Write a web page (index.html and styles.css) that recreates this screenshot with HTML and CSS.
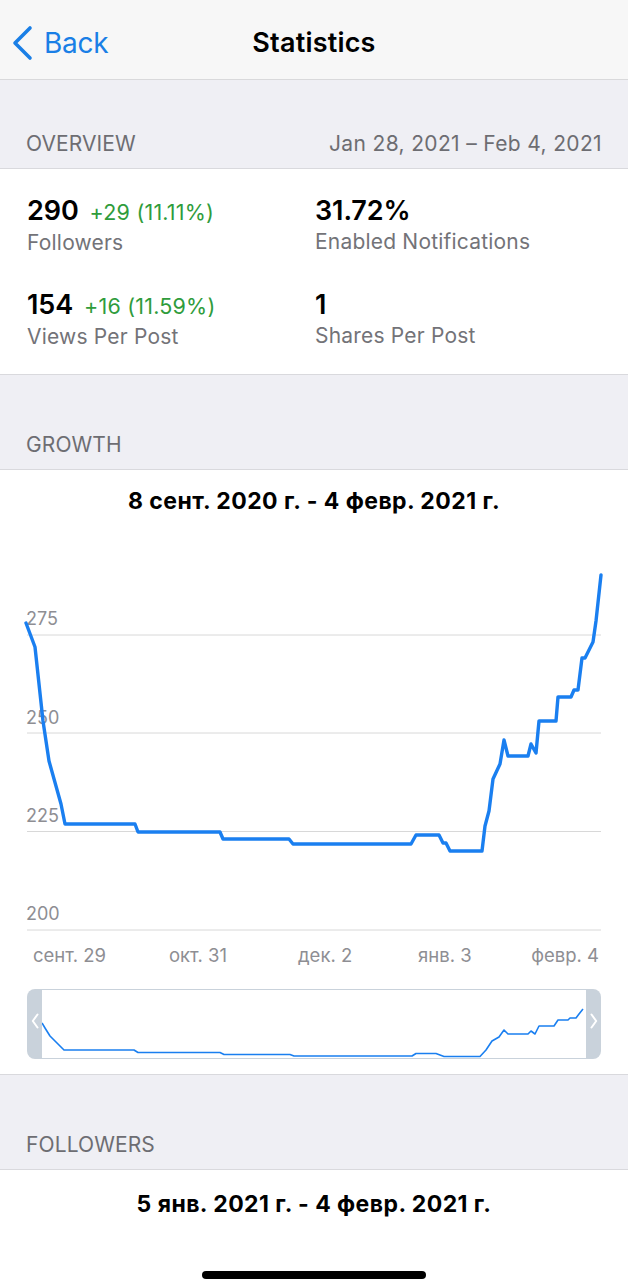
FILE: index.html
```html
<!DOCTYPE html>
<html lang="en">
<head>
<meta charset="utf-8">
<title>Statistics</title>
<link rel="stylesheet" href="styles.css">
</head>
<body>
<div class="screen">
  <header class="navbar">
    <a class="back">
      <svg class="back-chevron" width="24" height="36" viewBox="0 0 24 36"><path d="M20 3 L5 18 L20 33" fill="none" stroke="#1a7fe6" stroke-width="3.6" stroke-linecap="round" stroke-linejoin="round"/></svg>
      <span>Back</span>
    </a>
    <div class="nav-title">Statistics</div>
  </header>

  <div class="section-header first">
    <span>OVERVIEW</span>
    <span class="range">Jan 28, 2021 – Feb 4, 2021</span>
  </div>

  <section class="card overview">
    <div class="stat">
      <div class="value">290<span class="delta">+29 (11.11%)</span></div>
      <div class="label">Followers</div>
    </div>
    <div class="stat">
      <div class="value">31.72%</div>
      <div class="label">Enabled Notifications</div>
    </div>
    <div class="stat">
      <div class="value">154<span class="delta">+16 (11.59%)</span></div>
      <div class="label">Views Per Post</div>
    </div>
    <div class="stat">
      <div class="value">1</div>
      <div class="label">Shares Per Post</div>
    </div>
  </section>

  <div class="section-header">
    <span>GROWTH</span>
  </div>

  <section class="card chart-card">
    <div class="chart-title">8 сент. 2020 г. - 4 февр. 2021 г.</div>
    <svg class="chart" width="628" height="440" viewBox="0 530 628 440">
      <g class="grid">
        <line x1="27" y1="634" x2="601" y2="634"/>
        <line x1="27" y1="732" x2="601" y2="732"/>
        <line x1="27" y1="830.5" x2="601" y2="830.5"/>
        <line x1="27" y1="929" x2="601" y2="929"/>
      </g>
      <g class="ylabels">
        <text x="26" y="624">275</text>
        <text x="26" y="722.5">250</text>
        <text x="26" y="821">225</text>
        <text x="26" y="919">200</text>
      </g>
      <polyline class="line" points="26,622 35,646 43,720 49,760 61,803 65,823 135,823 138,831 220,831 223,838 289,838 293,843 411,843 416,834 439,834 443,842 446,842 450,850 482,850 485,825 489,810 493,778 500,763 504,739 508,755 528,755 531,743 536,752 539,720 556,720 558,696 571,696 574,689 578,689 582,657 585,657 593,641 596,620 601,574"/>
      <g class="xlabels">
        <text x="33" y="961">сент. 29</text>
        <text x="169" y="961">окт. 31</text>
        <text x="298" y="961">дек. 2</text>
        <text x="418" y="961">янв. 3</text>
        <text x="599" y="961" text-anchor="end">февр. 4</text>
      </g>
    </svg>
    <div class="navigator">
      <div class="handle">
        <svg width="8" height="16" viewBox="0 0 8 16"><path d="M6.5 1.5 L1.8 8 L6.5 14.5" fill="none" stroke="#fff" stroke-width="2" stroke-linecap="round" stroke-linejoin="round"/></svg>
      </div>
      <div class="window">
        <svg class="mini" width="543" height="68" viewBox="42 989 543 68">
          <polyline points="42,1022 45,1027 50,1035 64,1049 134,1049 138,1051.5 220,1051.5 224,1053.5 290,1053.5 294,1055 412,1055 416,1052.5 436,1052.5 440,1054 444,1055.5 480,1055.5 486,1049 492,1040 499,1036 504,1029 508,1033 528,1033 531,1030 535,1033 539,1025 554,1025 558,1019 568,1019 570,1017 576,1017 579,1013 583,1008"/>
        </svg>
      </div>
      <div class="handle">
        <svg width="8" height="16" viewBox="0 0 8 16"><path d="M1.5 1.5 L6.2 8 L1.5 14.5" fill="none" stroke="#fff" stroke-width="2" stroke-linecap="round" stroke-linejoin="round"/></svg>
      </div>
    </div>
  </section>

  <div class="section-header">
    <span>FOLLOWERS</span>
  </div>

  <section class="card followers-card">
    <div class="chart-title">5 янв. 2021 г. - 4 февр. 2021 г.</div>
    <div class="home-indicator"></div>
  </section>
</div>
</body>
</html>
```

FILE: styles.css
```css
* { box-sizing: border-box; }

html, body {
  margin: 0;
  padding: 0;
  background: #efeff4;
}

body {
  font-family: "Inter", "Roboto", "Liberation Sans", sans-serif;
  color: #000;
  -webkit-font-smoothing: antialiased;
}

.screen {
  width: 628px;
  height: 1280px;
  overflow: hidden;
  display: flex;
  flex-direction: column;
}

.navbar {
  height: 80px;
  flex: none;
  background: #f7f7f7;
  border-bottom: 1px solid #d9d9db;
  display: flex;
  align-items: center;
  justify-content: center;
  position: relative;
}

.back {
  position: absolute;
  left: 10px;
  top: 25px;
  display: flex;
  align-items: center;
  gap: 10px;
  color: #1a7fe6;
  font-size: 28px;
  letter-spacing: -0.3px;
}

.back-chevron { display: block; }

.nav-title {
  font-size: 27px;
  font-weight: 600;
  letter-spacing: 0.2px;
  margin-top: 6px;
}

.section-header {
  flex: none;
  height: 95px;
  padding: 0 26px 12px 26px;
  display: flex;
  align-items: flex-end;
  justify-content: space-between;
  color: #6d6d72;
  font-size: 21px;
  line-height: 24px;
  letter-spacing: 0.1px;
  border-bottom: 1px solid #d9d9dd;
}

.section-header .range {
  letter-spacing: 0.35px;
}

.section-header.first {
  height: 89px;
}

.card {
  background: #fff;
  flex: none;
}

.overview {
  display: grid;
  grid-template-columns: 288px 1fr;
  row-gap: 35px;
  padding: 27px 0 25px 27px;
  border-bottom: 1px solid #d9d9dd;
}

.stat .value {
  font-size: 27px;
  font-weight: 600;
  line-height: 30px;
  letter-spacing: -0.1px;
}

.stat .delta {
  color: #2f9c3c;
  font-size: 21.5px;
  font-weight: 400;
  margin-left: 11px;
  letter-spacing: 0.2px;
}

.stat .label {
  margin-top: 4px;
  color: #737378;
  font-size: 21px;
  line-height: 24px;
  letter-spacing: 0.2px;
}

.chart-card {
  padding: 18px 0 15px 0;
  border-bottom: 1px solid #d9d9dd;
}

.chart-title {
  text-align: center;
  font-family: "Inter", "Roboto", sans-serif;
  font-weight: 700;
  font-size: 23px;
  line-height: 26px;
  letter-spacing: 0.45px;
}

.chart {
  display: block;
  margin-top: 17px;
}

.grid line {
  stroke: #d8d8d8;
  stroke-width: 1;
}

.ylabels text, .xlabels text {
  font-family: "Inter", "Roboto", sans-serif;
  font-size: 18px;
  fill: #8e8e93;
}

.xlabels text { font-size: 18.5px; }

.line {
  fill: none;
  stroke: #1a7ff0;
  stroke-width: 3.4;
  stroke-linejoin: round;
  stroke-linecap: round;
}

.navigator {
  margin: 18px 27px 0 27px;
  height: 70px;
  border-radius: 8px;
  overflow: hidden;
  display: flex;
  background: #c9d2db;
}

.handle {
  width: 15px;
  flex: none;
  display: flex;
  align-items: center;
  justify-content: center;
  margin-top: -6px;
}

.window {
  flex: 1;
  background: #fff;
  margin: 1px 0;
}

.mini {
  display: block;
}

.mini polyline {
  fill: none;
  stroke: #1a7ff0;
  stroke-width: 1.6;
  stroke-linejoin: round;
}

.followers-card {
  flex: 1;
  padding-top: 21px;
  display: flex;
  flex-direction: column;
  align-items: center;
}

.followers-card .chart-title {
  width: 100%;
}

.home-indicator {
  margin-top: auto;
  margin-bottom: 1px;
  width: 224px;
  height: 8px;
  border-radius: 4px;
  background: #000;
}
```
